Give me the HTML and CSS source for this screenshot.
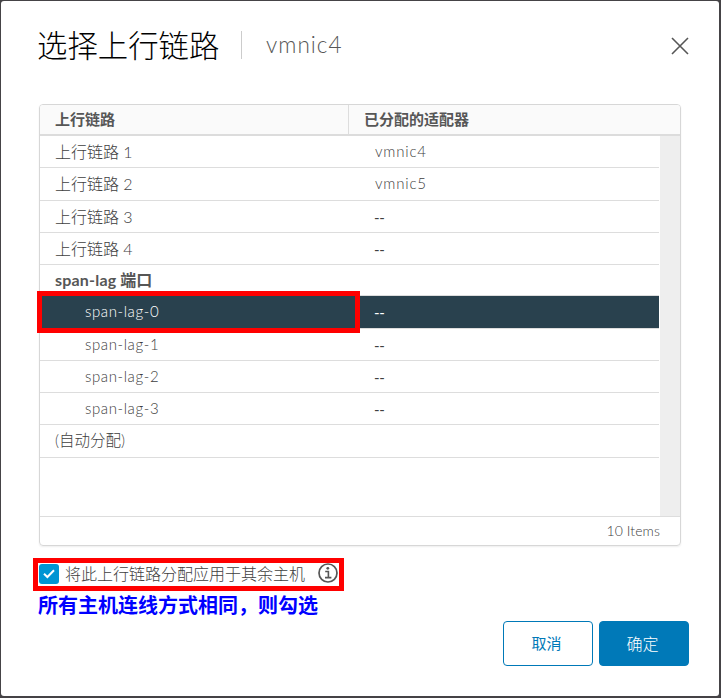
FILE: index.html
```html
<!DOCTYPE html>
<html lang="zh-CN">
<head>
<meta charset="utf-8">
<title>选择上行链路</title>
<link rel="stylesheet" href="styles.css">
</head>
<body>
<div class="dialog">
  <header class="title">
    <h1>选择上行链路</h1>
    <span class="subtitle">vmnic4</span>
    <svg class="close" viewBox="0 0 18 18" width="18" height="18"><path d="M1 1 17 17M17 1 1 17"/></svg>
  </header>
  <div class="grid">
    <div class="head"><div class="col">上行链路</div><div class="col">已分配的适配器</div></div>
    <div class="body">
      <div class="rows">
        <div class="row"><span class="name">上行链路 1</span><span class="val">vmnic4</span></div>
        <div class="row tall"><span class="name">上行链路 2</span><span class="val">vmnic5</span></div>
        <div class="row"><span class="name">上行链路 3</span><span class="val dash">--</span></div>
        <div class="row"><span class="name">上行链路 4</span><span class="val dash">--</span></div>
        <div class="row group"><span class="name"><span class="lag">span-lag</span> 端口</span></div>
        <div class="row tall selected"><span class="name child">span-lag-0</span><span class="val dash">--</span><span class="mark"></span></div>
        <div class="row"><span class="name child">span-lag-1</span><span class="val dash">--</span></div>
        <div class="row"><span class="name child">span-lag-2</span><span class="val dash">--</span></div>
        <div class="row"><span class="name child">span-lag-3</span><span class="val dash">--</span></div>
        <div class="row tall auto"><span class="name">(自动分配)</span></div>
      </div>
      <div class="track"></div>
    </div>
    <div class="foot">10 Items</div>
  </div>
  <div class="apply">
    <svg class="check" viewBox="0 0 20 20" width="20" height="20"><rect width="20" height="20" rx="3" fill="#0095d3"/><path d="M5 9.7 8.4 13 15 6.2" fill="none" stroke="#fff" stroke-width="2"/></svg>
    <span class="label">将此上行链路分配应用于其余主机</span>
    <svg class="info" viewBox="0 0 20 20" width="20" height="20"><circle cx="10" cy="10" r="9" fill="none" stroke="#565656" stroke-width="1.7"/><circle cx="9.8" cy="5.3" r="1.4" fill="#565656"/><path d="M7.2 8.5H10.4V14.5M7 14.6H13.4" fill="none" stroke="#565656" stroke-width="1.6"/></svg>
  </div>
  <p class="note">所有主机连线方式相同，则勾选</p>
  <footer class="actions"><button class="btn">取消</button><button class="btn primary">确定</button></footer>
</div>
</body>
</html>
```
FILE: styles.css
```css
* { box-sizing: border-box; }
body {
  margin: 0;
  height: 698px;
  padding: 1px 2px 2px 1px;
  overflow: hidden;
  background: #454346;
  color: #565656;
  font-family: Lato, "Noto Sans CJK SC", sans-serif;
  font-weight: 300;
}
.dialog {
  height: 695px;
  padding: 23px 30px 0 38px;
  background: #fff;
  border-radius: 3px;
}
.title { display: flex; align-items: center; height: 42px; }
h1 {
  margin: 0 0 0 -2px;
  width: 204px;
  font-size: 30.4px;
  line-height: 42px;
  font-weight: 300;
  color: #000;
  white-space: nowrap;
}
.subtitle {
  height: 28px;
  line-height: 27px;
  padding-left: 24px;
  border-left: 1px solid #ccc;
  font-size: 22.5px;
  letter-spacing: 1px;
}
.close { margin-left: auto; fill: none; stroke: #565656; stroke-width: 1.6; margin-top: 2px; }
.grid {
  width: 642px;
  height: 442px;
  margin-top: 38px;
  border: 1px solid #d7d7d7;
  border-radius: 4px;
  box-shadow: 0 1px 2px #eee;
}
.head {
  display: flex;
  height: 31px;
  background: #fafafa;
  border-bottom: 2px solid #dcdcdc;
  border-radius: 3px 3px 0 0;
  font-size: 15px;
  line-height: 29px;
  font-weight: 700;
}
.col { padding-left: 15px; width: 308px; }
.col + .col { width: auto; flex: 1; border-left: 1px solid #ddd; }
.body { display: flex; height: 380px; }
.rows { width: 619px; margin-right: 1px; }
.track { flex: 1; background: #eee; }
.row {
  display: flex;
  position: relative;
  height: 32px;
  line-height: 31px;
  border-bottom: 1px solid #ddd;
  font-size: 16px;
  color: #404040;
  white-space: nowrap;
}
.tall { height: 33px; }
.group { height: 31px; line-height: 29px; font-weight: 700; font-size: 16px; color: #565656; }
.lag { letter-spacing: 0.2px; }
.name { width: 334px; padding-left: 15px; }
.child { padding-left: 45px; font-size: 15px; letter-spacing: 0.6px; line-height: 30px; }
.val { font-size: 15px; letter-spacing: 0.8px; line-height: 30px; padding-left: 1px; }
.dash { letter-spacing: -0.4px; line-height: 32px; padding-left: 0; font-weight: 400; }
.auto { font-size: 15.5px; }
.selected .name, .selected .val { color: #fff; }
.selected { background: #29414e; }
.mark {
  position: absolute;
  left: -3px;
  top: -5px;
  width: 323px;
  height: 42px;
  border: 5px solid #f00;
}
.foot {
  height: 30px;
  line-height: 28px;
  padding-right: 20px;
  border-top: 1px solid #ddd;
  text-align: right;
  font-size: 14px;
  letter-spacing: 0.1px;
  color: #404040;
}
.apply {
  display: flex;
  align-items: flex-start;
  width: 311px;
  height: 33px;
  margin: 12px 0 0 -6px;
  border: 5px solid #f00;
}
.check, .info { flex: none; }
.check { margin: 1px 0 0 1px; }
.label { flex: none; width: 259px; padding-left: 6px; font-size: 16px; line-height: 21px; color: #404040; white-space: nowrap; }
.note {
  margin: 0 0 0 -1px;
  height: 30px;
  line-height: 29px;
  font-size: 20px;
  font-weight: 700;
  color: #00f;
}
.actions { display: flex; justify-content: flex-end; gap: 6px; }
.btn {
  width: 90px;
  height: 45px;
  padding: 0 3px 2px 0;
  border: 1px solid #0079b8;
  border-radius: 4px;
  background: #fff;
  color: #0079b8;
  font: 400 15px Lato, "Noto Sans CJK SC", sans-serif;
}
.primary { background: #0079b8; color: #fff; font-size: 16px; font-weight: 300; }
```
